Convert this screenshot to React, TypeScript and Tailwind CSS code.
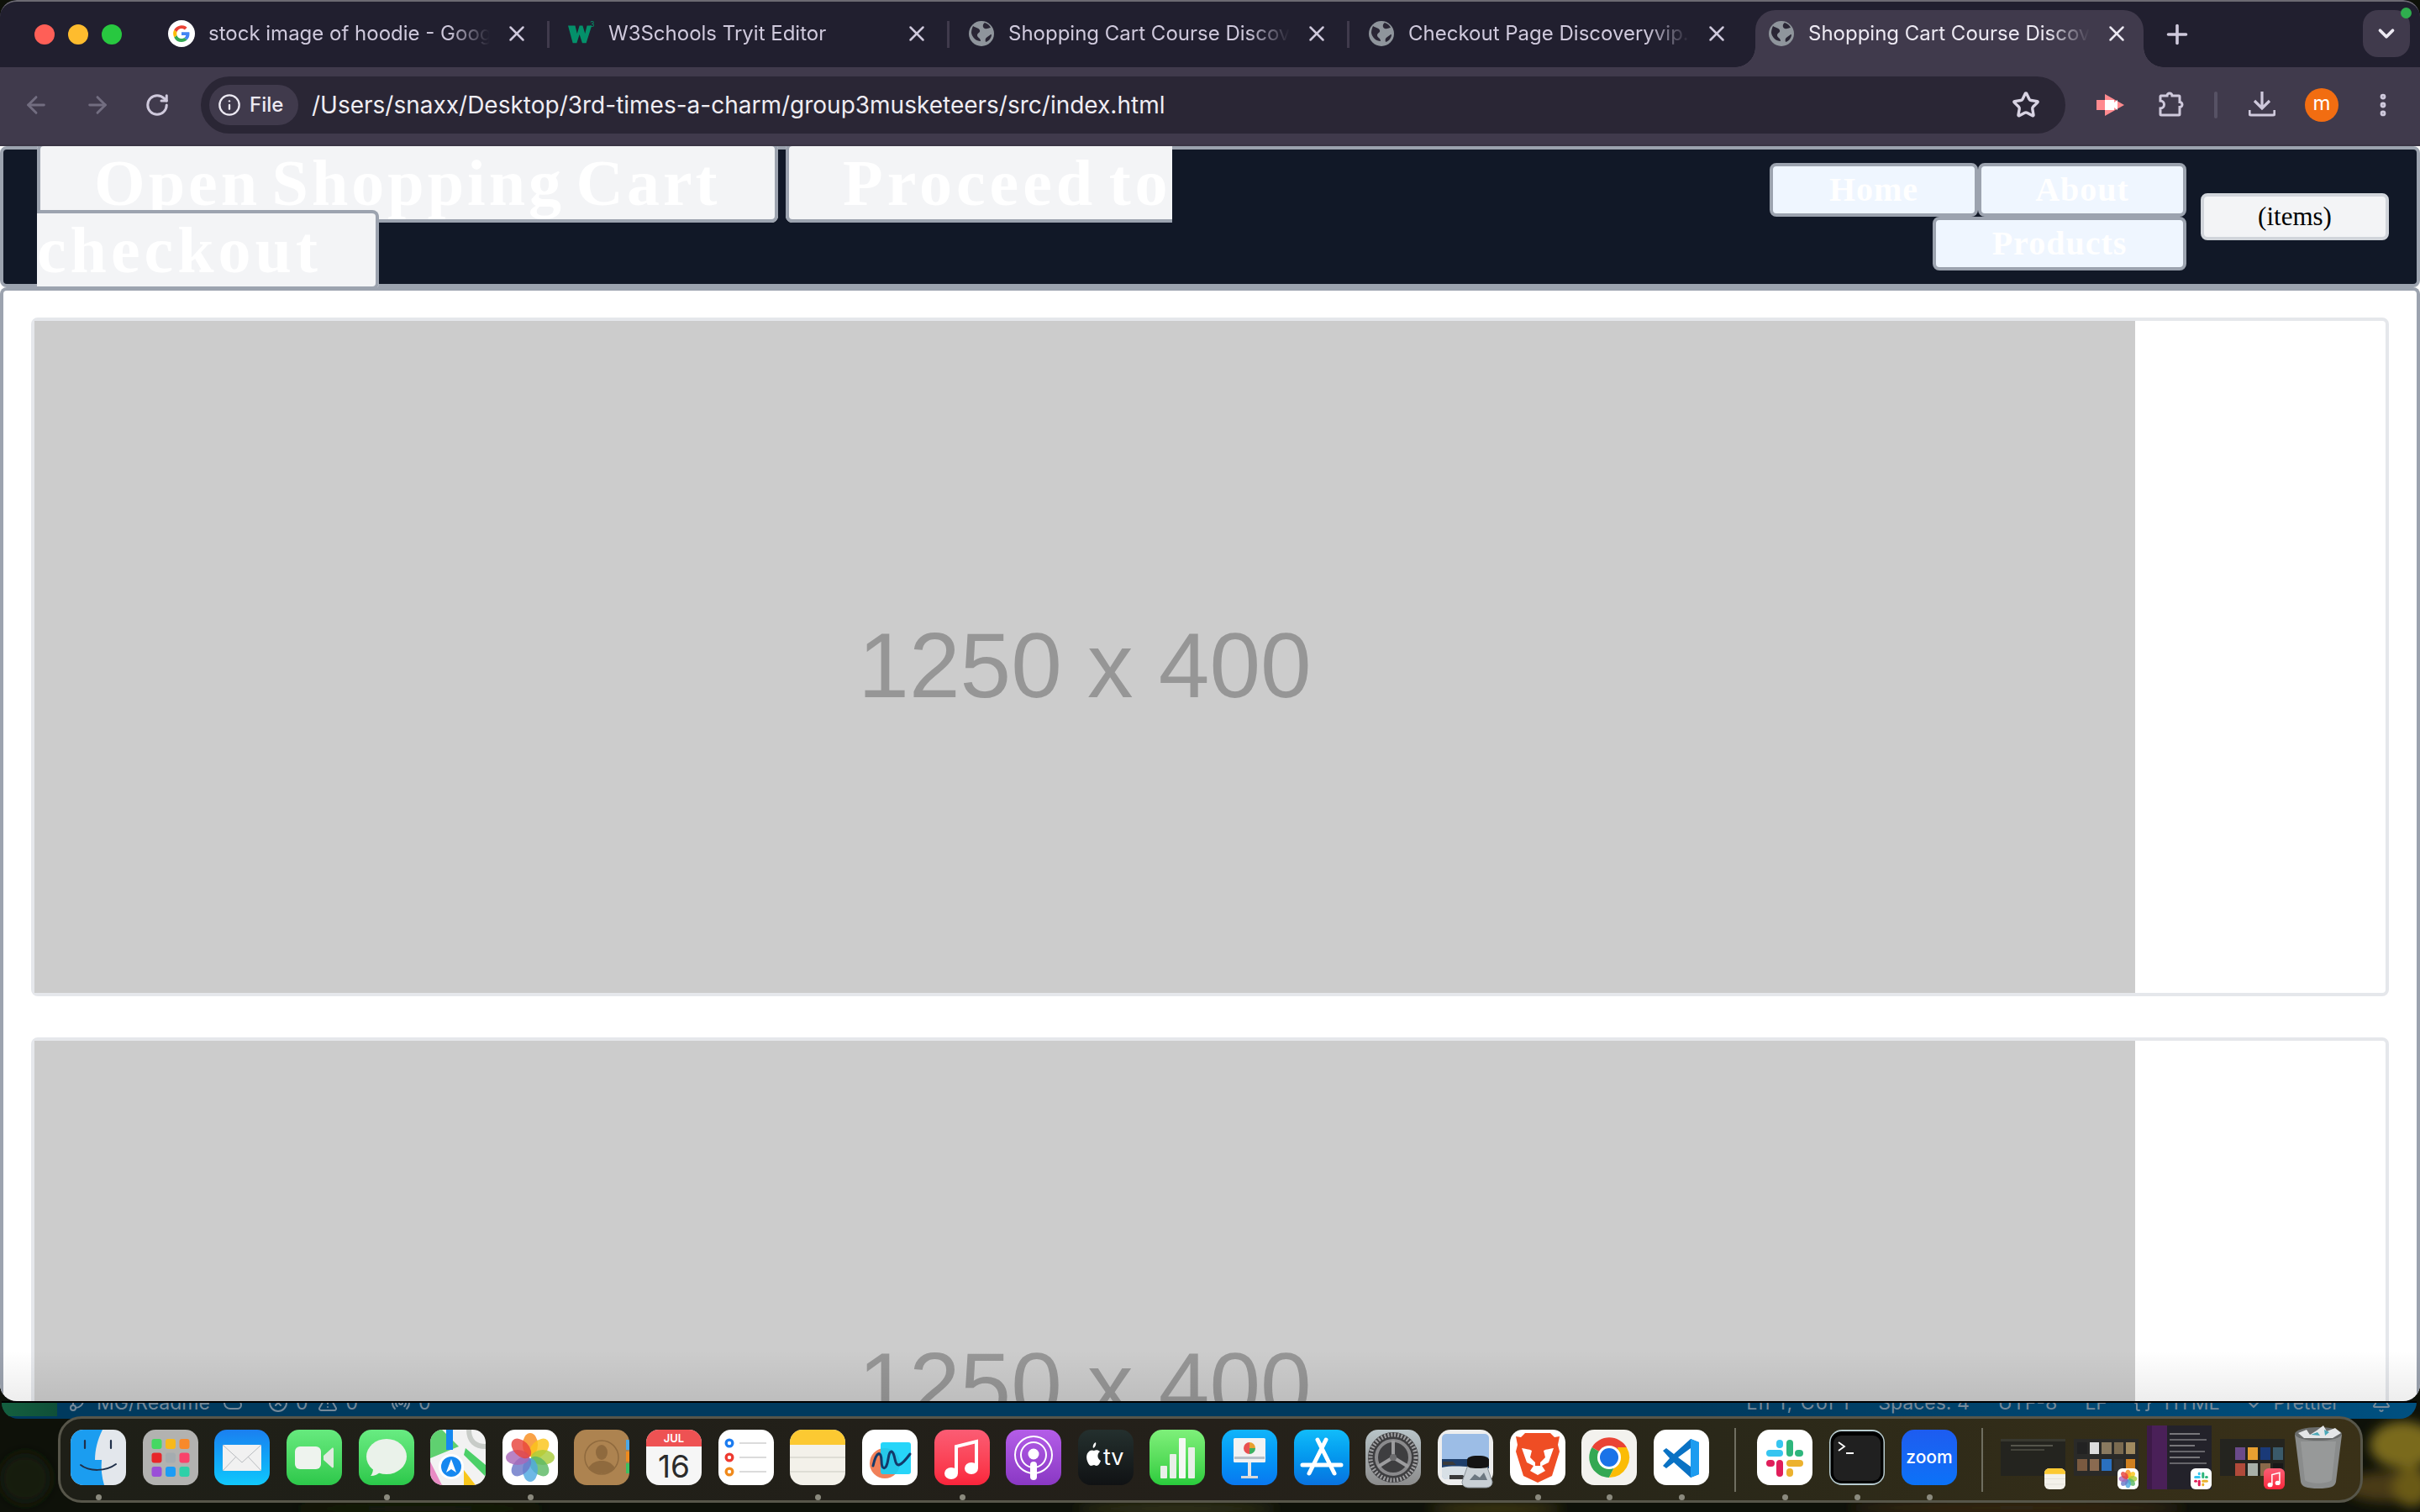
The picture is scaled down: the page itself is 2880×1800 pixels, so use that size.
import {
  ArrowLeft,
  ArrowRight,
  Bell,
  Braces,
  Check,
  ChevronDown,
  CircleX,
  Cloud,
  EllipsisVertical,
  GitBranch,
  Info,
  Plus,
  Radio,
  RotateCw,
  Star,
  TriangleAlert,
  X,
} from "lucide-react";
import { clsx } from "clsx";
import type { ReactNode } from "react";

function GoogleIcon() {
  return (
    <svg viewBox="0 0 32 32" className="w-8 h-8">
      <circle cx="16" cy="16" r="16" fill="#fff" />
      <path d="M25.5 16.2c0-.7-.1-1.4-.2-2H16v3.8h5.3a4.6 4.6 0 0 1-2 3l3.2 2.5c1.9-1.7 3-4.3 3-7.3z" fill="#4285f4" />
      <path d="M16 26c2.7 0 4.9-.9 6.5-2.5l-3.2-2.5c-.9.6-2 1-3.3 1-2.6 0-4.7-1.7-5.5-4.1l-3.3 2.5A10 10 0 0 0 16 26z" fill="#34a853" />
      <path d="M10.5 17.9a6 6 0 0 1 0-3.8l-3.3-2.5a10 10 0 0 0 0 8.8z" fill="#fbbc05" />
      <path d="M16 10c1.5 0 2.8.5 3.8 1.5l2.8-2.8A10 10 0 0 0 7.2 11.6l3.3 2.5C11.3 11.7 13.4 10 16 10z" fill="#ea4335" />
    </svg>
  );
}

function W3Icon() {
  return (
    <svg viewBox="0 0 34 32" className="w-[34px] h-8">
      <path d="M0 6h9l2.500 10 3-10h4l3 10 2.500-10h6l-7 22h-5l-3.500-11-3.500 11H6z" fill="#04906a" />
      <text x="28" y="8" fontSize="9" fill="#04906a" fontFamily="Inter, sans-serif">3</text>
    </svg>
  );
}

function GlobeIcon() {
  return (
    <svg viewBox="0 0 32 32" className="w-8 h-8">
      <circle cx="16" cy="16" r="15" fill="#8f959c" />
      <path d="M6 7c3 2 7 2 8 5s-3 3-3 6 4 3 4 7c-5 0-10-4-11-10 0-3 1-6 2-8zM20 3c3 1 6 3 7 6-3 0-4 2-7 1s-3-5 0-7zM28 17c0 4-3 8-7 9-1-3 0-5 2-6s3-3 5-3z" fill="#2a2635" />
    </svg>
  );
}

function Tab({
  icon,
  title,
  active,
  sep,
}: {
  icon: ReactNode;
  title: string;
  active?: boolean;
  sep?: boolean;
}) {
  return (
    <div className="relative flex items-center w-[476px] h-[68px] pl-[22px]">
      {active && (
        <>
          <div className="absolute left-[7px] top-0 w-[462px] h-[68px] bg-[#403a4c] rounded-t-[24px]" />
          <div className="absolute left-[-17px] bottom-0 w-6 h-6 bg-[radial-gradient(circle_at_0_0,transparent_23.5px,#403a4c_24px)]" />
          <div className="absolute left-[469px] bottom-0 w-6 h-6 bg-[radial-gradient(circle_at_100%_0,transparent_23.5px,#403a4c_24px)]" />
        </>
      )}
      <div className="relative flex items-center justify-center w-8 h-8 -mt-[12px]">{icon}</div>
      <div
        className={clsx(
          "relative ml-4 w-[335px] -mt-[12px] overflow-hidden whitespace-nowrap text-[24px] leading-8 [mask-image:linear-gradient(to_right,black_85%,transparent)]",
          active ? "text-[#ece9f2]" : "text-[#cfc9dc]",
        )}
      >
        {title}
      </div>
      <X className={clsx("relative ml-[17px] -mt-[12px]", active ? "text-[#ece9f2]" : "text-[#cfc9dc]")} size={30} strokeWidth={2} />
      {sep && <div className="absolute right-0 top-[13px] w-[3px] h-8 bg-[#403a4c]" />}
    </div>
  );
}

function TitleBar() {
  return (
    <div className="flex items-start h-20 bg-[#211f2f] border-t-2 border-[#6c6a72] rounded-t-[20px]">
      <div className="flex items-center gap-[16px] w-[178px] pl-[41px] h-[78px]">
        <div className="w-6 h-6 rounded-full bg-[#ff5f57]" />
        <div className="w-6 h-6 rounded-full bg-[#febc2e]" />
        <div className="w-6 h-6 rounded-full bg-[#28c840]" />
      </div>
      <div className="flex mt-[10px]">
        <Tab icon={<GoogleIcon />} title="stock image of hoodie - Google Search" sep />
        <Tab icon={<W3Icon />} title="W3Schools Tryit Editor" sep />
        <Tab icon={<GlobeIcon />} title="Shopping Cart Course Discovery" sep />
        <Tab icon={<GlobeIcon />} title="Checkout Page Discoveryvip.com" />
        <Tab icon={<GlobeIcon />} title="Shopping Cart Course Discovery" active />
      </div>
      <div className="flex items-center mt-[10px] h-[58px]">
        <Plus className="text-[#cfc9dc] ml-[15px]" size={36} strokeWidth={2.4} />
      </div>
      <div className="relative ml-[203px] mt-[10px] flex items-center justify-center w-14 h-14 rounded-[18px] bg-[#403a4c]">
        <ChevronDown className="text-[#ece9f2]" size={30} strokeWidth={3} />
        <div className="absolute -right-[2px] -top-[3px] w-[13px] h-[13px] rounded-full bg-[#2fae4e]" />
      </div>
    </div>
  );
}

function Toolbar() {
  return (
    <div className="flex items-center h-[94px] pb-[2px] bg-[#403a4c] border-b-2 border-[#3a3545]">
      <ArrowLeft className="ml-[27px] text-[#726d80]" size={32} strokeWidth={2.2} />
      <ArrowRight className="ml-[41px] text-[#726d80]" size={32} strokeWidth={2.2} />
      <RotateCw className="ml-[40px] text-[#cfc9dc]" size={30} strokeWidth={2.4} />
      <div className="flex items-center ml-[37px] w-[2219px] h-[68px] rounded-[34px] bg-[#2a2635]">
        <div className="flex items-center ml-[10px] w-[106px] h-12 rounded-[24px] bg-[#403a4c] text-[#ece9f2] text-[24px]">
          <Info className="ml-[10px]" size={28} strokeWidth={2} />
          <span className="ml-[10px] font-medium">File</span>
        </div>
        <span className="ml-[16px] text-[28px] text-[#efedf3] whitespace-nowrap">
          /Users/snaxx/Desktop/3rd-times-a-charm/group3musketeers/src/index.html
        </span>
        <Star className="ml-auto mr-[30px] text-[#d8d3e3]" size={34} strokeWidth={2.4} />
      </div>
      <svg viewBox="0 0 34 28" className="ml-[37px] w-[34px] h-7">
        <rect x="0" y="8" width="12" height="12" fill="#ff8a8f" />
        <path d="M10 1l23 13-23 13z" fill="#ff8a8f" />
        <path d="M10 8h11v3l4-3v12l-4-3v3H10z" fill="#fff" />
      </svg>
      <svg viewBox="0 0 32 32" className="ml-[38px] w-8 h-8" fill="none" stroke="#cfc9dc" strokeWidth="3">
        <path d="M4 5H12a3 3 0 0 1 6 0H26a1 1 0 0 1 1 1V12.5a3 3 0 0 1 0 6V27a1 1 0 0 1-1 1H5a1 1 0 0 1-1-1V20a4.5 4.5 0 0 0 0-9V6a1 1 0 0 1 1-1z" />
      </svg>
      <div className="ml-[36px] w-1 h-8 rounded bg-[#575265]" />
      <svg viewBox="0 0 32 32" className="ml-[37px] w-8 h-8" fill="none" stroke="#cfc9dc" strokeWidth="3.2">
        <path d="M16 0v18M7 11l9 9 9-9M1 22v4a2 2 0 0 0 2 2h26a2 2 0 0 0 2-2v-4" />
      </svg>
      <div className="ml-[35px] flex items-center justify-center w-10 h-10 rounded-full bg-[#f26d11] text-white text-[24px] leading-none pb-1">
        m
      </div>
      <EllipsisVertical className="ml-[36px] text-[#cfc9dc]" size={34} strokeWidth={2.8} />
    </div>
  );
}

function Placeholder() {
  return (
    <div className="w-[2806px] shrink-0 border-4 border-[#e5e7eb] rounded-lg bg-white">
      <div className="flex items-center justify-center w-[2500px] h-[800px] pt-5 bg-[#cccccc] text-[#969696] text-[109px] font-['Liberation_Sans',sans-serif] leading-none">
        1250 x 400
      </div>
    </div>
  );
}

function Header() {
  const big = "border-4 border-[#9ca3af] rounded-lg bg-[#f3f4f6] px-[64px] [box-decoration-break:slice]";
  return (
    <div className="flex h-[168px] shrink-0 border-4 border-[#9ca3af] rounded-lg bg-[#111827]">
      <div className="ml-10 w-[1360px] text-white text-[78px] leading-[80px] font-bold font-['Liberation_Serif',serif] [word-spacing:-10px]">
        <a className={clsx(big, "tracking-[4px]")}>Open Shopping Cart</a>{" "}
        <a className={clsx(big, "tracking-[5px]")}>Proceed to checkout</a>
      </div>
      <div className="ml-auto flex items-center">
        <div className="flex flex-wrap justify-end w-[510px] font-['Liberation_Serif',serif] font-bold text-white text-[40px] leading-[56px] tracking-[1px]">
          <div className="w-[248px] text-center border-4 border-[#9ca3af] rounded-lg bg-[#eff6ff]">Home</div>
          <div className="w-[248px] text-center border-4 border-[#9ca3af] rounded-lg bg-[#eff6ff]">About</div>
          <div className="w-[302px] text-center border-4 border-[#9ca3af] rounded-lg bg-[#eff6ff]">Products</div>
        </div>
        <div className="ml-[17px] mr-[33px] w-[224px] text-center border-4 border-[#d1d5db] rounded-lg bg-[#f3f4f6] text-black text-[31px] leading-[48px] font-['Liberation_Serif',serif]">
          (items)
        </div>
      </div>
    </div>
  );
}

function Page() {
  return (
    <div className="relative flex-1 flex flex-col min-h-0 overflow-hidden bg-white">
      <Header />
      <div className="flex flex-col gap-[49px] flex-1 min-h-0 overflow-hidden border-4 border-b-0 border-[#9ca3af] rounded-t-lg pl-[33px] pt-[32px]">
        <Placeholder />
        <Placeholder />
      </div>
      <div className="absolute left-0 right-0 bottom-0 h-[60px] bg-gradient-to-b from-transparent to-black/[0.07]" />
    </div>
  );
}

function StatusBar() {
  return (
    <div className="relative z-0 h-[21px] ml-[2px] mr-[4px] overflow-hidden rounded-b-[20px] bg-[linear-gradient(to_right,#003a5e,#003a5e_70%,#005080)] border-t-2 border-black">
      <div className="flex items-center h-6 -mt-[12px] text-[23px] leading-6 text-[#75899a] font-['Inter',sans-serif] whitespace-nowrap">
        <div className="w-[66px] h-8 bg-[linear-gradient(to_right,#14603f,#0f4f38)]" />
        <GitBranch className="ml-[13px]" size={24} />
        <span className="ml-[10px]">MG/Readme</span>
        <Cloud className="ml-[15px]" size={24} />
        <CircleX className="ml-[30px]" size={24} />
        <span className="ml-[9px]">0</span>
        <TriangleAlert className="ml-[12px]" size={24} />
        <span className="ml-[9px]">0</span>
        <Radio className="ml-[39px]" size={24} />
        <span className="ml-[9px]">0</span>
        <span className="ml-auto tracking-[1.5px]">Ln 1, Col 1</span>
        <span className="ml-[33px]">Spaces: 4</span>
        <span className="ml-[34px]">UTF-8</span>
        <span className="ml-[33px]">LF</span>
        <Braces className="ml-[30px]" size={24} />
        <span className="ml-[14px]">HTML</span>
        <Check className="ml-[32px]" size={24} />
        <span className="ml-[8px]">Prettier</span>
        <Bell className="ml-[38px] mr-[30px]" size={24} />
      </div>
    </div>
  );
}

function Tile({ bg, children }: { bg: string; children: ReactNode }) {
  return (
    <div className={clsx("w-full h-full rounded-[23%] overflow-hidden", bg)}>
      <svg viewBox="0 0 66 66" className="w-full h-full">
        {children}
      </svg>
    </div>
  );
}

function Finder() {
  return (
    <Tile bg="bg-[#e3e7ec]">
      <path d="M38 0c-6 12-9 24-9 36h8c-1 10 0 20 3 30H0V0z" fill="#1b9df0" />
      <path d="M17 13v9M48 13v9" stroke="#20304a" strokeWidth="2.2" strokeLinecap="round" />
      <path d="M12 42c10 8 30 8 42-1" fill="none" stroke="#20304a" strokeWidth="2" strokeLinecap="round" />
    </Tile>
  );
}

function Launchpad() {
  const colors = ["#46d862", "#f8b91c", "#f8892a", "#e8262a", "#a5acb0", "#f9436a", "#9a4fd8", "#1c9cf5", "#2ed0a8"];
  return (
    <Tile bg="bg-[#b2b2b0]">
      {colors.map((c, i) => (
        <rect key={i} x={10.5 + (i % 3) * 16.5} y={11 + Math.floor(i / 3) * 16.5} width="12" height="12" rx="3" fill={c} />
      ))}
    </Tile>
  );
}

function Mail() {
  return (
    <Tile bg="bg-gradient-to-b from-[#1b7ff0] to-[#12c8fc]">
      <rect x="10" y="18" width="46" height="31" rx="2" fill="#f1f1f1" />
      <path d="M10 18l23 21 23-21M10 49l16-17M56 49L40 32" fill="none" stroke="#b9bcc0" strokeWidth="1" />
    </Tile>
  );
}

function FaceTime() {
  return (
    <Tile bg="bg-gradient-to-b from-[#66ea7e] to-[#2cc84a]">
      <rect x="10" y="20" width="31" height="27" rx="6" fill="#eef3ee" />
      <path d="M44 31l10-9c1-1 2 0 2 1v21c0 1-1 2-2 1l-10-9z" fill="#dfeadf" />
    </Tile>
  );
}

function Messages() {
  return (
    <Tile bg="bg-gradient-to-b from-[#68ec82] to-[#2ac84a]">
      <ellipse cx="33" cy="32" rx="24" ry="21" fill="#eaf2ea" />
      <path d="M17 46c0 5-2 8-3 9 5 0 9-2 12-5z" fill="#eaf2ea" />
    </Tile>
  );
}

function Maps() {
  return (
    <Tile bg="bg-[#f2f2f2]">
      <path d="M0 0h14l20 20-34 14z" fill="#5fd070" />
      <path d="M0 38l14 28H0z" fill="#e88bc4" />
      <path d="M40 48l14 18H40z" fill="#f8c61c" />
      <path d="M42 22l24 20v14L40 30z" fill="#4cd068" />
      <path d="M46 0c0 14 8 20 20 20" fill="none" stroke="#c8ccc8" strokeWidth="6" />
      <rect x="19" y="0" width="8" height="24" fill="#1688f0" />
      <circle cx="25" cy="44" r="15" fill="#fff" />
      <circle cx="25" cy="44" r="12" fill="#1688f0" />
      <path d="M25 35l6 16-6-4-6 4z" fill="#fff" />
    </Tile>
  );
}

function Photos() {
  const petals = ["#f88e1e", "#fac41a", "#a8cc3a", "#5cb864", "#4ea8e0", "#6a78c8", "#a868b8", "#e8443c"];
  return (
    <Tile bg="bg-white">
      {petals.map((c, i) => (
        <ellipse key={i} cx="33" cy="18" rx="9" ry="14" fill={c} opacity="0.82" transform={`rotate(${i * 45} 33 33)`} />
      ))}
    </Tile>
  );
}

function Contacts() {
  return (
    <Tile bg="bg-[#ad8350]">
      <circle cx="33" cy="33" r="20" fill="none" stroke="#8f6a3e" strokeWidth="1.5" />
      <ellipse cx="33" cy="27" rx="7" ry="9" fill="#8f6a3e" />
      <path d="M17 46c4-7 10-9 16-9s12 2 16 9c-8 8-24 8-32 0z" fill="#8f6a3e" />
      <rect x="62" y="12" width="4" height="12" fill="#4aa8e8" />
      <rect x="62" y="26" width="4" height="12" fill="#f08a1c" />
      <rect x="62" y="40" width="4" height="12" fill="#3cc060" />
    </Tile>
  );
}

function CalendarIcon() {
  return (
    <Tile bg="bg-[#f6f6f6]">
      <rect width="66" height="20" fill="#ee5253" />
      <text x="33" y="15" textAnchor="middle" fontSize="13" fontWeight="600" fill="#fff" fontFamily="Inter, sans-serif">JUL</text>
      <text x="33" y="57" textAnchor="middle" fontSize="37" fill="#2b2b2b" fontFamily="Inter, sans-serif">16</text>
    </Tile>
  );
}

function Reminders() {
  const dots = ["#1c7cf0", "#ee3a30", "#f08a1c"];
  return (
    <Tile bg="bg-white">
      {dots.map((c, i) => (
        <g key={i}>
          <circle cx="13" cy={16 + i * 17} r="5.5" fill={c} />
          <circle cx="13" cy={16 + i * 17} r="2.2" fill="#fff" />
          <path d={`M25 ${16 + i * 17}h32`} stroke="#b8b8b8" strokeWidth="1.2" />
        </g>
      ))}
    </Tile>
  );
}

function Notes() {
  return (
    <Tile bg="bg-[#f3f1ea]">
      <rect width="66" height="18" fill="#fcc932" />
      <path d="M0 33h66M0 50h66" stroke="#d8d6ce" strokeWidth="1.5" />
    </Tile>
  );
}

function Freeform() {
  return (
    <Tile bg="bg-white">
      <circle cx="27" cy="40" r="18" fill="#f0805a" />
      <rect x="22" y="15" width="36" height="38" rx="3" fill="#10d0f8" opacity="0.9" />
      <path d="M13 43c4-18 10-18 10-6s6 12 8-2 6-10 8 0 6 10 18-6" fill="none" stroke="#123a6a" strokeWidth="3" strokeLinecap="round" />
    </Tile>
  );
}

function Music() {
  return (
    <Tile bg="bg-gradient-to-b from-[#fb5c74] to-[#fa233b]">
      <path d="M26 52V20l24-6v32" fill="none" stroke="#fff" strokeWidth="4" />
      <ellipse cx="20" cy="52" rx="8" ry="7" fill="#fff" />
      <ellipse cx="44" cy="46" rx="8" ry="7" fill="#fff" />
    </Tile>
  );
}

function Podcasts() {
  return (
    <Tile bg="bg-gradient-to-b from-[#b45de8] to-[#8a38c4]">
      <circle cx="33" cy="30" r="22" fill="none" stroke="#fff" strokeWidth="2" />
      <circle cx="33" cy="30" r="15" fill="none" stroke="#fff" strokeWidth="2" />
      <circle cx="33" cy="29" r="6.5" fill="#fff" />
      <rect x="29" y="38" width="8" height="22" rx="4" fill="#fff" />
    </Tile>
  );
}

function AppleTv() {
  return (
    <Tile bg="bg-gradient-to-b from-[#24302e] to-[#101214]">
      <path d="M18 22c-1-3 1-6 3-7 1 3-1 6-3 7zM12 27c2-3 5-3 7-2 2-1 5-1 7 1-4 3-3 9 1 11-1 3-3 6-5 6-2 0-2-1-3-1s-2 1-4 1c-4-2-7-12-3-16z" fill="#fff" />
      <text x="30" y="42" fontSize="27" fill="#fff" fontFamily="Inter, sans-serif">tv</text>
    </Tile>
  );
}

function Numbers() {
  return (
    <Tile bg="bg-gradient-to-b from-[#7ef07a] to-[#28cc3c]">
      <rect x="13" y="43" width="8" height="15" rx="1" fill="#e8efe8" />
      <rect x="24" y="29" width="8" height="29" rx="1" fill="#e8efe8" />
      <rect x="35" y="10" width="8" height="48" rx="1" fill="#f4f8f4" />
      <rect x="46" y="21" width="8" height="37" rx="1" fill="#e8efe8" />
    </Tile>
  );
}

function Keynote() {
  return (
    <Tile bg="bg-gradient-to-b from-[#12b4fa] to-[#0a78f0]">
      <rect x="14" y="10" width="38" height="29" rx="1.5" fill="#f2f2f2" />
      <path d="M33 15a7 7 0 0 1 7 7h-7z" fill="#e8a030" />
      <path d="M33 22h7a7 7 0 0 1-7 7z" fill="#3cb060" />
      <path d="M33 29a7 7 0 0 1 0-14z" fill="#e85050" />
      <rect x="15" y="32" width="36" height="3" fill="#b8c0c8" />
      <rect x="31" y="39" width="4" height="19" fill="#e6e6e6" />
      <rect x="23" y="55" width="20" height="3" fill="#d8d8d8" />
    </Tile>
  );
}

function AppStore() {
  return (
    <Tile bg="bg-gradient-to-b from-[#12bcfa] to-[#0a72e0]">
      <path d="M28 12l20 40M38 12L18 52M10 42h46" stroke="#fff" strokeWidth="5" strokeLinecap="round" />
    </Tile>
  );
}

function Settings() {
  return (
    <Tile bg="bg-gradient-to-b from-[#b8c4c8] to-[#8c8c8c]">
      <circle cx="33" cy="33" r="30" fill="#3e3e40" />
      <circle cx="33" cy="33" r="27" fill="none" stroke="#a0a0a2" strokeWidth="5" strokeDasharray="2 2" />
      <circle cx="33" cy="33" r="20" fill="none" stroke="#8a8a8c" strokeWidth="4" />
      <path d="M33 33V13M33 33L15 44M33 33l18 11" stroke="#9c9c9e" strokeWidth="4" />
      <circle cx="33" cy="33" r="4" fill="#6c6c6e" />
    </Tile>
  );
}

function Preview() {
  return (
    <div className="relative w-full h-full">
      <Tile bg="bg-[#eeeeee]">
        <rect x="5" y="5" width="56" height="54" rx="5" fill="#9cbde6" />
        <path d="M5 35h56v12H5z" fill="#1e3e6a" />
        <path d="M5 45c14-3 30-1 56 1v8a5 5 0 0 1-5 5H10a5 5 0 0 1-5-5z" fill="#d8e0e6" />
        <path d="M6 38h12l4 4H6zM14 54h16l4 5H14z" fill="#3a3a3a" />
      </Tile>
      <svg viewBox="0 0 70 74" className="absolute left-0 top-0 w-[70px] h-[74px]">
        <path d="M36 42h22l7 20c0 5-4 7-8 7H37c-4 0-8-2-8-7z" fill="#c9d0d5" stroke="#8a9298" strokeWidth="1" />
        <path d="M35 36c0-3 4-5 13-5s13 2 13 5v6c0 3-4 4-13 4s-13-1-13-4z" fill="#141414" />
        <path d="M38 60l6-7 6 4 5-6 4 9z" fill="#6c7780" />
      </svg>
    </div>
  );
}

function Brave() {
  return (
    <Tile bg="bg-white">
      <path d="M18 4h30l5 5 6-1-2 10 2 8-9 29-17 8-17-8-9-29 2-8-2-10 6 1z" fill="#ef4d24" />
      <path d="M14 22c4 1 9 1 12 3l-2 8 6 6v4h6v-4l6-6-2-8c3-2 8-2 12-3l-6 17-8 4 4 6-9 5-9-5 4-6-8-4z" fill="#fff" />
    </Tile>
  );
}

function Chrome() {
  return (
    <Tile bg="bg-[#f3f2ee]">
      <path d="M33 33L12.5 21A24 24 0 0 1 53.8 21z" fill="#ea4335" />
      <path d="M33 33l-20.5-12a24 24 0 0 0 20.5 36l12-24z" fill="#34a853" />
      <path d="M43 21h10.8A24 24 0 0 1 33 57l12-24z" fill="#fbbc05" />
      <circle cx="33" cy="33" r="14" fill="#fff" />
      <circle cx="33" cy="33" r="11" fill="#1a73e8" />
    </Tile>
  );
}

function VsCode() {
  return (
    <Tile bg="bg-white">
      <path d="M11 25l4-3 9 7 20-18 10 4v38l-10 4-20-18-9 7-4-3 8-9zM44 22L29 33l15 11z" fill="#0a72c4" />
      <path d="M44 11l10 4v38l-10 4z" fill="#1c9cf0" />
    </Tile>
  );
}

function Slack() {
  return (
    <Tile bg="bg-white">
      <rect x="11" y="24" width="20" height="8" rx="4" fill="#36c5f0" />
      <rect x="23" y="12" width="8" height="10" rx="4" fill="#36c5f0" />
      <rect x="35" y="12" width="8" height="20" rx="4" fill="#2eb67d" />
      <rect x="45" y="24" width="10" height="8" rx="4" fill="#2eb67d" />
      <rect x="35" y="36" width="20" height="8" rx="4" fill="#ecb22e" />
      <rect x="35" y="46" width="8" height="10" rx="4" fill="#ecb22e" />
      <rect x="23" y="36" width="8" height="20" rx="4" fill="#e01e5a" />
      <rect x="11" y="36" width="10" height="8" rx="4" fill="#e01e5a" />
    </Tile>
  );
}

function Terminal() {
  return (
    <Tile bg="bg-[#b8ccd0]">
      <rect x="1.5" y="2" width="63" height="62" rx="13" fill="#000" />
      <rect x="5" y="7" width="56" height="54" rx="9" fill="#202020" />
      <path d="M11 15l7 5-7 5" fill="none" stroke="#fff" strokeWidth="1.8" />
      <path d="M20 28h9" stroke="#fff" strokeWidth="1.8" />
    </Tile>
  );
}

function ZoomIcon() {
  return (
    <Tile bg="bg-gradient-to-b from-[#1d5cf0] to-[#0a72f8]">
      <text x="33" y="40" textAnchor="middle" fontSize="21" fontWeight="500" fill="#fff" fontFamily="Inter, sans-serif">zoom</text>
    </Tile>
  );
}

function Trash() {
  return (
    <svg viewBox="0 0 58 76" className="w-[58px] h-[76px]">
      <path d="M1 12h56l-7 56c-1 6-7 8-21 8s-20-2-21-8z" fill="#8a8c8c" />
      <path d="M8 20h42l-5 46c-6 5-26 5-32 0z" fill="#a0a2a2" opacity="0.6" />
      <ellipse cx="29" cy="11" rx="28" ry="8" fill="#6a6c6c" />
      <path d="M5 10l10-4 4 6 8-5 8-6 4 7 10-4 7 6-10 6H12z" fill="#e4e6e8" />
      <path d="M20 12l8-3 3 4zM36 6l6 3-5 4z" fill="#4aa8b8" />
    </svg>
  );
}

const apps: { node: ReactNode; on?: boolean }[] = [
  { node: <Finder />, on: true },
  { node: <Launchpad /> },
  { node: <Mail /> },
  { node: <FaceTime /> },
  { node: <Messages />, on: true },
  { node: <Maps /> },
  { node: <Photos />, on: true },
  { node: <Contacts /> },
  { node: <CalendarIcon /> },
  { node: <Reminders /> },
  { node: <Notes />, on: true },
  { node: <Freeform /> },
  { node: <Music />, on: true },
  { node: <Podcasts /> },
  { node: <AppleTv /> },
  { node: <Numbers /> },
  { node: <Keynote /> },
  { node: <AppStore /> },
  { node: <Settings /> },
  { node: <Preview /> },
  { node: <Brave />, on: true },
  { node: <Chrome />, on: true },
  { node: <VsCode />, on: true },
];

const photoThumbs = [
  "bg-[#222]",
  "bg-[#ddd]",
  "bg-[#8a7a60]",
  "bg-[#7a6a50]",
  "bg-[#a08a60]",
  "bg-[#7a5a40]",
  "bg-[#8a6a50]",
  "bg-[#2a70c0]",
  "bg-[#333]",
  "bg-[#d08020]",
];

const musicThumbs = [
  "bg-[#6a4a8a]",
  "bg-[#e8a030]",
  "bg-[#1a3a78]",
  "bg-[#3a5a6a]",
  "bg-[#b04a3a]",
  "bg-[#a8b0a8]",
  "bg-[#8a6a4a]",
  "bg-[#181818]",
];

function DockItem({ node, on, cell }: { node: ReactNode; on?: boolean; cell: string }) {
  return (
    <div className={clsx("shrink-0", cell)}>
      <div className="w-[66px] h-[66px]">{node}</div>
      <div className={clsx("mt-[11px] ml-[30px] w-[7px] h-[7px] rounded-full", on ? "bg-[#8b8a7e]" : "bg-transparent")} />
    </div>
  );
}

function Thumb({ tall, wrap, mini, children }: { tall?: boolean; wrap: string; mini: ReactNode; children: ReactNode }) {
  return (
    <div className="relative flex items-center w-[77px] h-[76px]">
      <div className={clsx("w-full overflow-hidden", tall ? "h-[76px]" : "h-[44px]", wrap)}>{children}</div>
      <div className="absolute right-0 bottom-0 w-[25px] h-[25px]">{mini}</div>
    </div>
  );
}

function Dock() {
  return (
    <div className="relative z-10 -mt-[3px] ml-[69px] w-[2743px] h-[103px] flex rounded-[28px] border-[3px] border-[#57564a] bg-[linear-gradient(to_right,#1e1f17,#24201a_50%,#2a2819_72%,#3a3118)]">
      <div className="flex pt-[13px] pl-[12px]">
        {apps.map((a, i) => (
          <DockItem key={i} node={a.node} on={a.on} cell="w-[85.64px]" />
        ))}
      </div>
      <div className="ml-[11px] mt-[11px] w-[2px] h-[76px] bg-[#6f6e60]" />
      <div className="flex pt-[13px] ml-[25px]">
        <DockItem node={<Slack />} on cell="w-[86px]" />
        <DockItem node={<Terminal />} on cell="w-[86px]" />
        <DockItem node={<ZoomIcon />} on cell="w-[86px]" />
      </div>
      <div className="ml-[9px] mt-[11px] w-[2px] h-[76px] bg-[#6f6e60]" />
      <div className="flex gap-[10px] ml-[21px] mt-[8px] h-[76px]">
        <Thumb wrap="bg-[#24241f]" mini={<Notes />}>
          <div className="h-[3px] bg-[#38382f]" />
          <div className="ml-[12px] mt-[4px] w-[50px] h-[2px] bg-[#55554c]" />
          <div className="ml-[12px] mt-[3px] w-[40px] h-[2px] bg-[#44443c]" />
        </Thumb>
        <Thumb wrap="bg-[#2a2a28] grid grid-cols-5 gap-[3px] p-[4px]" mini={<Photos />}>
          {photoThumbs.map((c) => (
            <div key={c} className={clsx("h-[14px]", c)} />
          ))}
        </Thumb>
        <Thumb tall wrap="flex bg-[#23222a]" mini={<Slack />}>
          <div className="w-[6px] h-full bg-[#3d1a48]" />
          <div className="w-[18px] h-full bg-[#4a2058]" />
          <div className="flex-1 flex flex-col gap-[5px] pt-[9px] pl-[3px]">
            <div className="w-[36px] h-[2px] bg-[#77767a]" />
            <div className="w-[44px] h-[2px] bg-[#66656a]" />
            <div className="w-[30px] h-[2px] bg-[#77767a]" />
            <div className="w-[42px] h-[2px] bg-[#66656a]" />
            <div className="w-[36px] h-[2px] bg-[#77767a]" />
            <div className="w-[44px] h-[2px] bg-[#66656a]" />
          </div>
        </Thumb>
        <Thumb wrap="bg-[#24241f] grid grid-cols-4 gap-[3px] pl-[18px] pr-[2px] pt-[10px]" mini={<Music />}>
          {musicThumbs.map((c) => (
            <div key={c} className={clsx("h-[15px]", c)} />
          ))}
        </Thumb>
      </div>
      <div className="ml-[11px] mt-[7px]">
        <Trash />
      </div>
    </div>
  );
}

function Wallpaper() {
  return (
    <svg viewBox="0 0 2880 1800" className="absolute inset-0 w-full h-full">
      <defs>
        <filter id="soft">
          <feGaussianBlur stdDeviation="7" />
        </filter>
      </defs>
      <g filter="url(#soft)">
        <ellipse cx="2860" cy="1720" rx="40" ry="28" fill="#7a6a1e" />
        <ellipse cx="2840" cy="1770" rx="50" ry="18" fill="#4a3a14" />
        <ellipse cx="2870" cy="1770" rx="22" ry="24" fill="#6a5a18" />
        <ellipse cx="2400" cy="1795" rx="200" ry="8" fill="#3a2c14" />
        <ellipse cx="1400" cy="1796" rx="120" ry="6" fill="#3a3a1a" />
        <ellipse cx="1780" cy="1796" rx="80" ry="6" fill="#4a4018" />
        <ellipse cx="500" cy="1796" rx="150" ry="5" fill="#1e2210" />
        <ellipse cx="30" cy="1760" rx="30" ry="30" fill="#161a0e" />
      </g>
    </svg>
  );
}

export default function App() {
  return (
    <div className="relative w-[2880px] h-[1800px] overflow-hidden bg-[#0e1109] font-['Inter',sans-serif]">
      <Wallpaper />
      <div className="relative flex flex-col h-[1668px] rounded-[20px] overflow-hidden bg-[#211f2f]">
        <TitleBar />
        <Toolbar />
        <Page />
      </div>
      <StatusBar />
      <Dock />
    </div>
  );
}
